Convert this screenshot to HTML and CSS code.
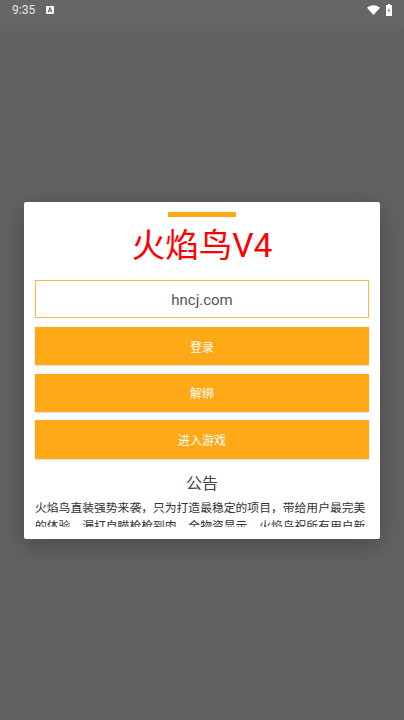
FILE: index.html
```html
<!DOCTYPE html>
<html lang="zh-CN">
<head>
<meta charset="utf-8">
<title>火焰鸟V4</title>
<link rel="stylesheet" href="styles.css">
</head>
<body>
<div class="status">
  <div class="status-left">
    <span class="time">9:35</span>
    <svg class="a-icon" width="8" height="8" viewBox="0 0 8 8"><rect width="8" height="8" rx="1" fill="#fff"/><path d="M2 6.5 4 1.5 6 6.5M2.8 5H5.200" fill="none" stroke="#555" stroke-width="1"/></svg>
  </div>
  <div class="status-right">
    <svg width="13" height="10" viewBox="0 0 13 10"><path d="M0 2.800 C3.500 -0.600 9.500 -0.600 13 2.800 L6.500 10 Z" fill="#fff"/></svg>
    <svg width="6" height="12" viewBox="0 0 6 12"><path d="M2 0h2v1H5.600a.4.4 0 0 1 .4.4V11.600a.4.4 0 0 1-.4.4H.4a.4.4 0 0 1-.4-.4V1.400A.4.4 0 0 1 .4 1H2Z" fill="#fff"/><path d="M3.500 3.500 1.900 7H3L2.500 9.500 4.200 6H3Z" fill="#666"/></svg>
  </div>
</div>
<main class="overlay">
  <section class="card">
    <div class="accent"></div>
    <h1 class="title">火焰鸟V4</h1>
    <div class="field">hncj.com</div>
    <div class="actions">
      <div class="btn">登录</div>
      <div class="btn">解绑</div>
      <div class="btn">进入游戏</div>
    </div>
    <h2 class="notice-title">公告</h2>
    <div class="notice-box">
      <p class="notice">火焰鸟直装强势来袭，只为打造最稳定的项目，带给用户最完美的体验。漏打自瞄枪枪到肉，全物资显示，火焰鸟祝所有用户新年快乐，游戏愉快，感谢大家一直以来的支持与陪伴。</p>
    </div>
  </section>
</main>
</body>
</html>
```
FILE: styles.css
```css
* { box-sizing: border-box; }
html, body { margin: 0; height: 100%; }
body {
  width: 404px;
  height: 720px;
  overflow: hidden;
  display: flex;
  flex-direction: column;
  background: linear-gradient(#666 0, #666 20px, #626262 32px);
  font-family: Roboto, "Noto Sans CJK SC", sans-serif;
}
.status {
  height: 20px;
  flex: none;
  display: flex;
  justify-content: space-between;
  align-items: center;
  padding: 0 12px;
}
.status-left, .status-right { display: flex; align-items: center; }
.status-left { gap: 11px; }
.status-right { gap: 6px; }
.time { color: #e6e6e6; font-size: 12px; }
.a-icon { display: block; }
.overlay { flex: 1; padding: 182px 24px 0; }
.card {
  height: 337px;
  background: #fff;
  border-radius: 2px;
  padding: 10px 11px 12px;
  overflow: hidden;
  display: flex;
  flex-direction: column;
  box-shadow: 0 6px 24px rgba(0,0,0,.28);
}
.accent { width: 68px; height: 5px; background: #ffa916; margin: 0 auto; flex: none; }
.title {
  margin: 6px 0 0;
  flex: none;
  height: 45px;
  line-height: 45px;
  text-align: center;
  font-size: 33.500px;
  font-weight: 400;
  color: #f00;
}
.field {
  margin-top: 12px;
  flex: none;
  height: 38px;
  padding-top: 1px;
  border: 1px solid #ffb73a;
  display: flex;
  align-items: center;
  justify-content: center;
  font-size: 15px;
  color: #555;
}
.actions { margin-top: 9px; flex: none; display: flex; flex-direction: column; gap: 8.330px; }
.btn {
  height: 38.330px;
  background: #ffa916;
  color: #fff;
  font-size: 12px;
  display: flex;
  align-items: center;
  justify-content: center;
  box-shadow: 0 1px 2px rgba(0,0,0,.15);
}
.notice-title {
  margin: 14px 0 0;
  flex: none;
  height: 22px;
  line-height: 22px;
  text-align: center;
  font-size: 16px;
  font-weight: 400;
  color: #444;
}
.notice-box { flex: 1; min-height: 0; overflow: hidden; margin-top: 4.600px; }
.notice {
  margin: 0;
  font-size: 11.800px;
  line-height: 18px;
  color: #333;
}
```
